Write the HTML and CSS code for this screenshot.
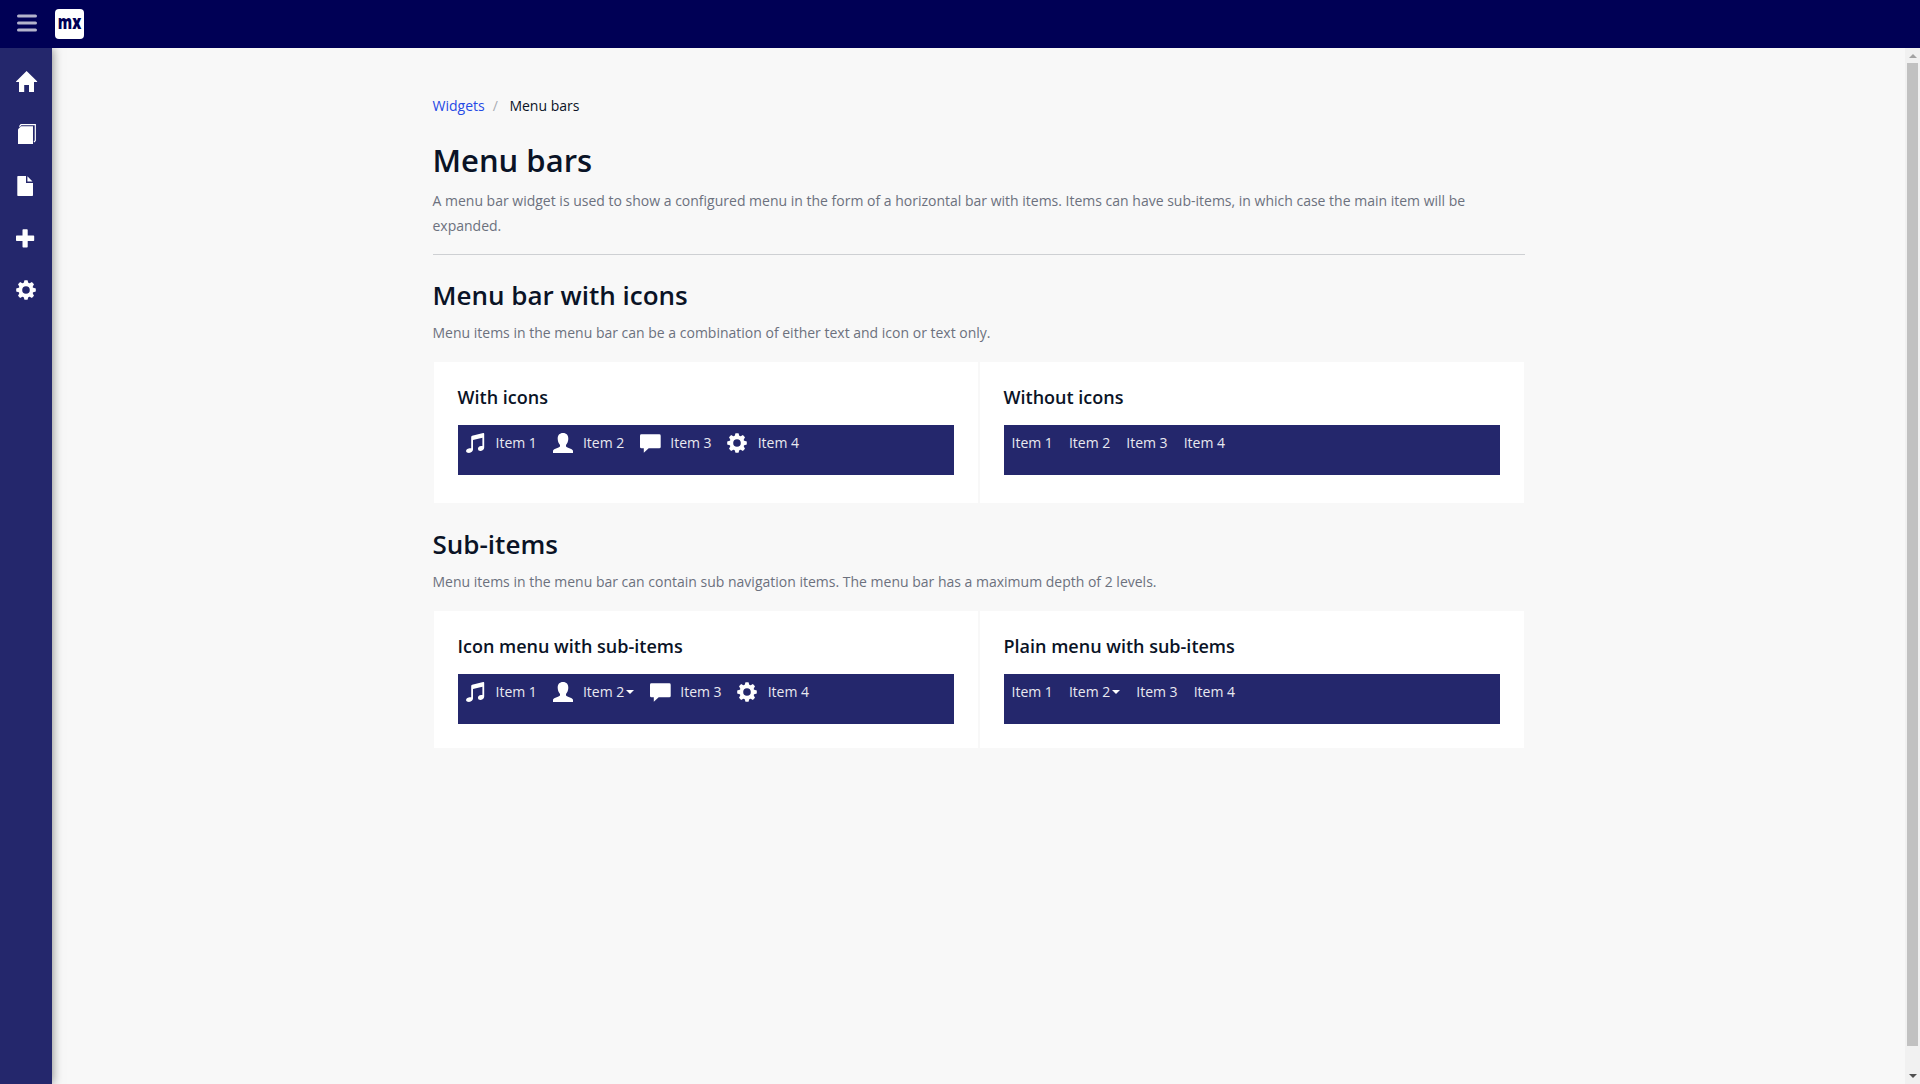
FILE: index.html
```html
<!DOCTYPE html>
<html lang="en">
<head>
<meta charset="utf-8">
<title>Menu bars</title>
<link rel="stylesheet" href="styles.css">
</head>
<body>
<svg class="sprite" aria-hidden="true">
  <symbol id="home" viewBox="0 0 22 22"><path d="M10.6 1 21.3 11.4 20.9 12H18v10H13v-7H8.2v7H3V12H.2L0 11.4z"/></symbol>
  <symbol id="pages" viewBox="0 0 22 22"><path d="M5 4.300H17V22H2V7.200z"/><path d="M3.400 4.600 5 2.600H19.300V18.600L18 20" fill="none" stroke="currentColor" stroke-width="1.200"/></symbol>
  <symbol id="file" viewBox="0 0 22 22"><path d="M2 2H10V9H17V21.2Q17 22 16.2 22H2Q1.3 22 1.3 21.2V2.800Q1.300 2 2 2zM11.400 2.300 16.500 7.600H11.400z"/></symbol>
  <symbol id="plus" viewBox="0 0 22 22"><path d="M7.200 1.300h3.800q.7 0 .7.7v5.600h5.800q.7 0 .7.7v4q0 .7-.7.7H11.700v5.800q0 .7-.7.7H7.200q-.7 0-.7-.7V13H.7q-.7 0-.7-.7v-4q0-.7.7-.7H6.500V2q0-.7.7-.7z"/></symbol>
  <symbol id="cog" viewBox="-10 -10 20 20">
    <circle r="5.600" fill="none" stroke="currentColor" stroke-width="3.600"/>
    <g id="teeth"><path id="tooth" d="M-2.500-6.500-1.500-9.800H1.500L2.500-6.500z"/><use href="#tooth" transform="rotate(45)"/><use href="#tooth" transform="rotate(90)"/><use href="#tooth" transform="rotate(135)"/></g>
    <use href="#teeth" transform="rotate(180)"/>
  </symbol>
  <symbol id="music" viewBox="0 0 20 20"><path d="M5.200 3.800Q5.300 3 6.100 2.700L17.200 0Q18.200-.1 18.200.9V14.500Q18.100 17.500 14.700 17.900 12 18 11.900 15.900 12 13.300 15.100 12.900L16.400 12.900V4.700L7 7.100V16.600Q6.800 19.500 3 20 .2 20 0 18.200.1 15.700 3.400 15.200L5.200 15.200z"/></symbol>
  <symbol id="user" viewBox="0 0 20 20"><path d="M10 0C13.500 0 15.500 2.200 15.300 6 15.200 8.700 14.200 10.500 13 12V13.200C13 14.400 19.500 15.600 20 17.800V20H0V17.800C.5 15.600 7 14.400 7 13.200V12C5.800 10.500 4.800 8.700 4.700 6 4.500 2.200 6.500 0 10 0z"/></symbol>
  <symbol id="comment" viewBox="0 0 21 20"><path d="M1.400 1.300H19.300Q20.700 1.300 20.700 2.700V13.900Q20.700 15.300 19.300 15.300H8.700L3.800 19.700V15.300H1.400Q0 15.300 0 13.900V2.700Q0 1.300 1.400 1.300z"/></symbol>
</svg>
<div class="app">
  <header class="topbar">
    <svg class="toggle" viewBox="0 0 20 18"><path d="M1.500 2h17M1.500 9h17M1.500 16h17"/></svg>
    <svg class="logo" viewBox="0 0 29 30"><rect width="29" height="30" rx="4"/><text x="2.800" y="20" textLength="23.500" lengthAdjust="spacingAndGlyphs">mx</text></svg>
  </header>
  <div class="body">
    <nav class="sidebar">
      <svg><use href="#home"/></svg>
      <svg><use href="#pages"/></svg>
      <svg><use href="#file"/></svg>
      <svg class="side-plus"><use href="#plus"/></svg>
      <svg class="side-cog"><use href="#cog"/></svg>
    </nav>
    <main class="main">
      <div class="content">
        <div class="breadcrumb"><a>Widgets</a><span class="sep">/</span><span>Menu bars</span></div>
        <h1>Menu bars</h1>
        <p class="intro">A menu bar widget is used to show a configured menu in the form of a horizontal bar with items. Items can have sub-items, in which case the main item will be expanded.</p>
        <section class="first">
          <h2>Menu bar with icons</h2>
          <p>Menu items in the menu bar can be a combination of either text and icon or text only.</p>
          <div class="cards">
            <div class="card">
              <h4>With icons</h4>
              <div class="menubar">
                <a><svg><use href="#music"/></svg>Item 1</a>
                <a><svg><use href="#user"/></svg>Item 2</a>
                <a><svg class="wide"><use href="#comment"/></svg>Item 3</a>
                <a><svg class="cog"><use href="#cog"/></svg>Item 4</a>
              </div>
            </div>
            <div class="card">
              <h4>Without icons</h4>
              <div class="menubar"><a>Item 1</a><a>Item 2</a><a>Item 3</a><a>Item 4</a></div>
            </div>
          </div>
        </section>
        <section class="second">
          <h2>Sub-items</h2>
          <p>Menu items in the menu bar can contain sub navigation items. The menu bar has a maximum depth of 2 levels.</p>
          <div class="cards">
            <div class="card">
              <h4>Icon menu with sub-items</h4>
              <div class="menubar">
                <a><svg><use href="#music"/></svg>Item 1</a>
                <a><svg><use href="#user"/></svg>Item 2<i class="caret"></i></a>
                <a><svg class="wide"><use href="#comment"/></svg>Item 3</a>
                <a><svg class="cog"><use href="#cog"/></svg>Item 4</a>
              </div>
            </div>
            <div class="card">
              <h4>Plain menu with sub-items</h4>
              <div class="menubar"><a>Item 1</a><a>Item 2<i class="caret"></i></a><a>Item 3</a><a>Item 4</a></div>
            </div>
          </div>
        </section>
      </div>
    </main>
    <div class="scrollbar"><i class="up"></i><div class="thumb"></div><i class="down"></i></div>
  </div>
</div>
</body>
</html>
```
FILE: styles.css
```css
* { box-sizing: border-box; }
body { margin: 0; background: #f8f8f8; color: #0a1326; font: 14px/25px "Open Sans", sans-serif; overflow: hidden; }
svg { display: block; fill: currentColor; overflow: visible; flex: none; }
.sprite { position: absolute; width: 0; height: 0; }
.app { display: flex; flex-direction: column; height: 1084px; }
.topbar { display: flex; height: 48px; background: #000055; }
.toggle { width: 20px; height: 18px; margin: 14px 0 0 17px; stroke: #b3b3cc; stroke-width: 3; stroke-linecap: round; }
.logo { width: 29px; height: 30px; margin: 9px 0 0 18px; fill: #fff; }
.logo text { fill: #000055; font: 800 20px "Open Sans", sans-serif; }
.body { display: flex; flex: 1; min-height: 0; }
.sidebar { display: flex; flex-direction: column; gap: 30px; width: 52px; padding: 22px 0 0 16px; background: #24276c; color: #fff; box-shadow: 0 0 10px rgba(0, 0, 0, .5); clip-path: inset(0 -20px 0 0); z-index: 1; }
.sidebar svg { width: 22px; height: 22px; }
.sidebar .side-plus { margin-top: 2px; }
.sidebar .side-cog { width: 20px; height: 20px; margin-left: -.3px; }
.main { flex: 1; display: flex; justify-content: center; }
.content { width: 1092px; padding-top: 45px; }
.breadcrumb { display: flex; height: 25px; }
.breadcrumb a { color: #264ae5; }
.sep { color: #a9acb3; margin: 0 11.600px 0 8px; }
h1, h2, h4, p { margin: 0; }
h1, h2, h4 { font-weight: 600; }
h1 { font-size: 31px; line-height: 40px; margin-top: 22px; }
p { color: #6c717e; }
.intro { margin-top: 8px; padding-bottom: 16px; border-bottom: 1px solid #ced0d3; }
h2 { font-size: 26px; line-height: 34px; }
.first { margin-top: 23px; }
.second { margin-top: 24px; }
section p { margin-top: 8px; }
h4 { font-size: 18px; line-height: 24px; margin-bottom: 16px; }
.cards { display: flex; margin-top: 17px; }
.card { flex: 1; padding: 23px 24px 24px; background: #fff; border: solid #f8f8f8; border-width: 0 1px; }
.first .card { padding-bottom: 28px; }
.menubar { display: flex; align-items: flex-start; height: 50px; background: #24276c; color: #e9e9f0; line-height: 20px; }
.menubar a { display: flex; align-items: flex-start; padding: 8px; }
.menubar svg { width: 20px; height: 20px; margin-right: 10px; color: #fff; }
.menubar .wide { width: 21px; margin-right: 9px; }
.menubar .cog { margin-left: -.5px; margin-right: 10.500px; }
.caret { border: 4px solid transparent; border-top-color: #fff; border-bottom: 0; margin: 8px 0 0 2px; }
.scrollbar { display: flex; flex-direction: column; align-items: center; width: 15px; background: #f1f1f1; }
.thumb { width: 11px; height: 983px; background: #c1c1c1; margin: 5px 0 28px; }
.up { border: 4px solid transparent; border-top: 0; border-bottom-color: #a3a3a3; margin-top: 6px; }
.down { border: 4px solid transparent; border-bottom: 0; border-top-color: #505050; }
```
